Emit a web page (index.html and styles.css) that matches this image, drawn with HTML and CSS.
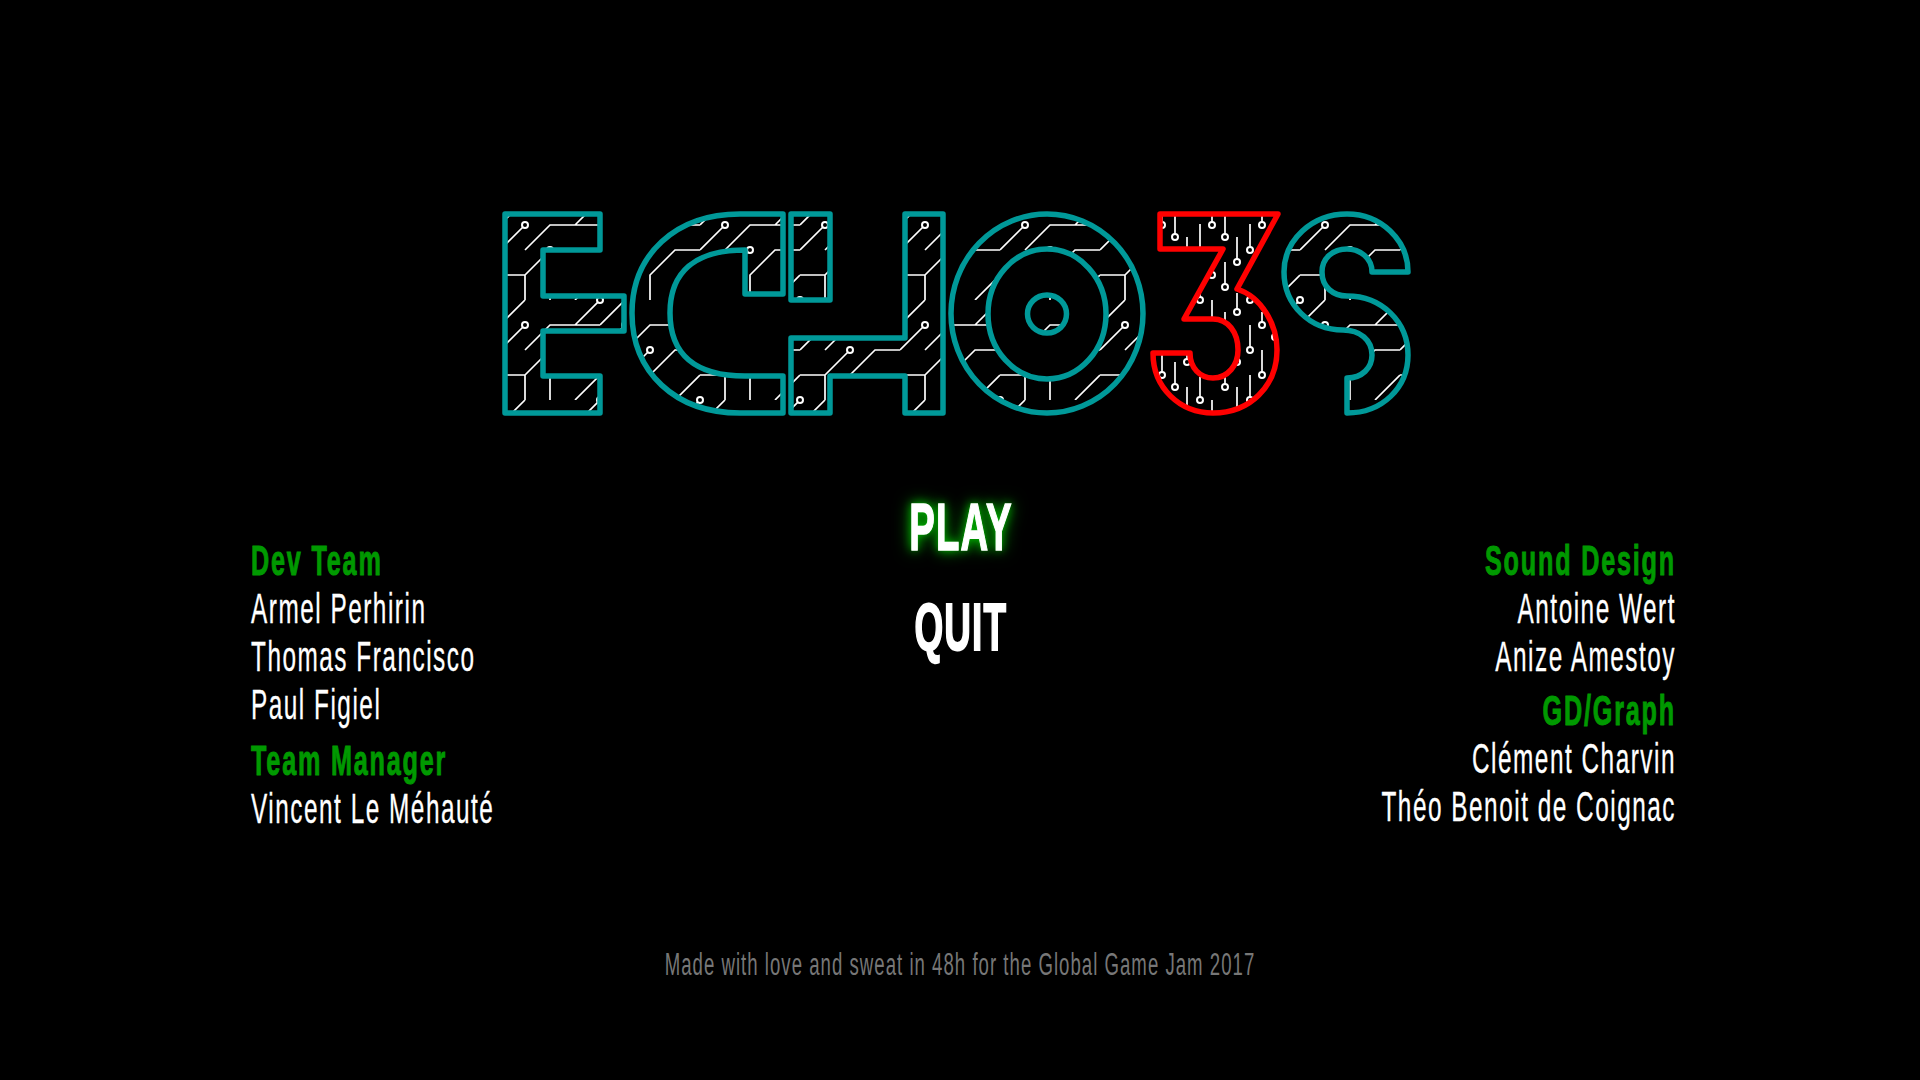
FILE: index.html
```html
<!DOCTYPE html>
<html lang="en">
<head>
  <meta charset="UTF-8">
  <title>Echo3s</title>
  <link rel="stylesheet" href="styles.css">
</head>
<body>
  <header class="logo-wrap">
    <svg class="logo" width="920" height="208" viewBox="500 210 920 208" role="img" aria-label="ECHO3S">
      <defs>
        <pattern id="circuit" patternUnits="userSpaceOnUse" x="0" y="0" width="100" height="100">
          <path class="trace" d="M25 25L0 50M100 50H75L50 75V100M25 50L50 25H100M75 25L100 0M25 75L50 50M0 75H25V100M25 0L0 25M75 100L100 75"/>
          <circle class="node" cx="25" cy="25" r="3"/>
          <circle class="node" cx="50" cy="50" r="3"/>
          <circle class="node" cx="0" cy="0" r="3"/>
          <circle class="node" cx="100" cy="0" r="3"/>
          <circle class="node" cx="0" cy="100" r="3"/>
          <circle class="node" cx="100" cy="100" r="3"/>
        </pattern>
        <clipPath id="three-clip">
          <path d="M1160 214H1278L1237 289C1262 297 1277 325 1277 350C1277 386 1250 413 1213 413C1180 413 1153 388 1153 353H1190C1190 368 1200 378 1213 378C1228 378 1238 365 1238 350C1238 332 1228 319 1213 319H1184L1223 249H1160Z"/>
        </clipPath>
      </defs>

      <!-- E -->
      <path class="letter" d="M505 214H600V250H543V296H624V331H543V376H600V413H505Z"/>
      <!-- C -->
      <path class="letter" d="M783 214V294H745V250C695 250 670 272 670 313C670 354 695 376 745 376H783V413H740C675 413 632 372 632 313C632 255 675 214 740 214Z"/>
      <!-- H -->
      <path class="letter" d="M791 214H830V300H791Z"/>
      <path class="letter" d="M791 338H905V214H943V413H905V376H830V413H791Z"/>
      <!-- O -->
      <path class="letter" fill-rule="evenodd" d="M951 313.500A96 99.500 0 1 0 1143 313.500A96 99.500 0 1 0 951 313.500ZM988 314A59 65 0 1 1 1106 314A59 65 0 1 1 988 314Z"/>
      <ellipse class="letter" cx="1047" cy="314" rx="19.500" ry="19"/>

      <!-- 3 -->
      <g clip-path="url(#three-clip)">
        <path class="trace" d="M1162 210V225M1162 350V375M1175 210V237M1175 362V387M1187 237V247M1187 340V362M1187 387V407M1200 224V250M1200 280V300M1200 377V400M1212 210V225M1212 260V275M1212 300V320M1212 400V413M1225 210V237M1225 262V287M1225 312V325M1225 362V387M1237 237V262M1237 293V312M1237 340V362M1237 387V410M1250 224V250M1250 280V300M1250 325V350M1250 375V400M1262 210V225M1262 312V325M1262 350V375M1275 320V337"/>
        <circle class="node" cx="1162" cy="225" r="3"/>
        <circle class="node" cx="1162" cy="375" r="3"/>
        <circle class="node" cx="1175" cy="237" r="3"/>
        <circle class="node" cx="1175" cy="387" r="3"/>
        <circle class="node" cx="1187" cy="362" r="3"/>
        <circle class="node" cx="1200" cy="300" r="3"/>
        <circle class="node" cx="1200" cy="400" r="3"/>
        <circle class="node" cx="1212" cy="225" r="3"/>
        <circle class="node" cx="1212" cy="275" r="3"/>
        <circle class="node" cx="1225" cy="237" r="3"/>
        <circle class="node" cx="1225" cy="287" r="3"/>
        <circle class="node" cx="1225" cy="387" r="3"/>
        <circle class="node" cx="1237" cy="262" r="3"/>
        <circle class="node" cx="1237" cy="312" r="3"/>
        <circle class="node" cx="1237" cy="362" r="3"/>
        <circle class="node" cx="1250" cy="250" r="3"/>
        <circle class="node" cx="1250" cy="300" r="3"/>
        <circle class="node" cx="1250" cy="350" r="3"/>
        <circle class="node" cx="1250" cy="400" r="3"/>
        <circle class="node" cx="1262" cy="225" r="3"/>
        <circle class="node" cx="1262" cy="325" r="3"/>
        <circle class="node" cx="1262" cy="375" r="3"/>
        <circle class="node" cx="1275" cy="337" r="3"/>
      </g>
      <path class="letter-red" d="M1160 214H1278L1237 289C1262 297 1277 325 1277 350C1277 386 1250 413 1213 413C1180 413 1153 388 1153 353H1190C1190 368 1200 378 1213 378C1228 378 1238 365 1238 350C1238 332 1228 319 1213 319H1184L1223 249H1160Z"/>

      <!-- S -->
      <path class="letter" d="M1347 413V378C1362 378 1372 368 1372 355C1372 340 1360 330 1343 330C1310 330 1284 305 1284 272C1284 240 1312 214 1347 214C1381 214 1408 240 1408 272H1372C1372 258 1360 249 1347 249C1333 249 1322 258 1322 272C1322 287 1333 296 1347 296C1382 296 1408 322 1408 355C1408 388 1382 413 1347 413Z"/>
    </svg>
  </header>

  <main class="content">
    <section class="credits credits-left">
      <h2 class="role">Dev Team</h2>
      <p class="name">Armel Perhirin</p>
      <p class="name">Thomas Francisco</p>
      <p class="name">Paul Figiel</p>
      <h2 class="role role-next">Team Manager</h2>
      <p class="name">Vincent Le Méhauté</p>
    </section>

    <nav class="menu">
      <a class="menu-item menu-item-active">PLAY</a>
      <a class="menu-item menu-item-quit">QUIT</a>
    </nav>

    <section class="credits credits-right">
      <h2 class="role">Sound Design</h2>
      <p class="name">Antoine Wert</p>
      <p class="name">Anize Amestoy</p>
      <h2 class="role role-next">GD/Graph</h2>
      <p class="name">Clément Charvin</p>
      <p class="name">Théo Benoit de Coignac</p>
    </section>
  </main>

  <footer class="footer">Made with love and sweat in 48h for the Global Game Jam 2017</footer>
</body>
</html>
```

FILE: styles.css
```css
html, body {
  margin: 0;
  height: 100%;
}

body {
  background-color: #000;
  color: #fff;
  font-family: "Liberation Sans Narrow", "Liberation Sans", Arial, sans-serif;
  overflow: hidden;
}

.logo-wrap {
  padding-top: 210px;
  padding-left: 500px;
}

.logo {
  display: block;
}

.trace {
  fill: none;
  stroke: #fff;
  stroke-width: 1.7;
}

.node {
  fill: #000;
  stroke: #fff;
  stroke-width: 2;
}

.letter {
  fill: url(#circuit);
  stroke: #009999;
  stroke-width: 5.5;
  stroke-linejoin: round;
}

.letter-red {
  fill: none;
  stroke: #ff0000;
  stroke-width: 5.5;
  stroke-linejoin: round;
}

.content {
  display: grid;
  grid-template-columns: 1fr auto 1fr;
  padding: 0 244px;
}

.credits {
  margin-top: 119px;
}

.role, .name {
  margin: 0;
  font-size: 42px;
  line-height: 48px;
  white-space: nowrap;
}

.role {
  color: #009900;
  font-weight: bold;
  letter-spacing: 3px;
  -webkit-text-stroke: 1px #009900;
  transform: scaleX(0.6);
}

.name {
  font-weight: normal;
  letter-spacing: 2.6px;
  -webkit-text-stroke: 0.3px #fff;
  transform: scaleX(0.58);
}

.credits-left {
  padding-left: 7px;
}

.credits-left .role, .credits-left .name {
  transform-origin: left center;
}

.credits-left .role-next {
  margin-top: 8px;
}

.credits-right {
  text-align: right;
}

.credits-right .role, .credits-right .name {
  transform-origin: right center;
}

.credits-right .role-next {
  margin-top: 6px;
}

.menu {
  display: flex;
  flex-direction: column;
  align-items: center;
  margin-top: 59px;
}

.menu-item {
  font-size: 66px;
  line-height: 100px;
  font-weight: bold;
  letter-spacing: 2px;
  -webkit-text-stroke: 1.5px #fff;
  transform: translateX(1px) scaleX(0.58);
}

.menu-item-active {
  text-shadow: 0 0 2px #00dd00, 0 0 12px #00cc00, 0 0 22px #00aa00;
}

.menu-item-quit {
  -webkit-text-stroke-width: 2px;
  transform: translateX(1px) scaleX(0.56);
}

.footer {
  margin-top: 112px;
  font-size: 31px;
  line-height: 40px;
  letter-spacing: 1.7px;
  text-align: center;
  color: #777;
  transform: scaleX(0.6);
}
```
